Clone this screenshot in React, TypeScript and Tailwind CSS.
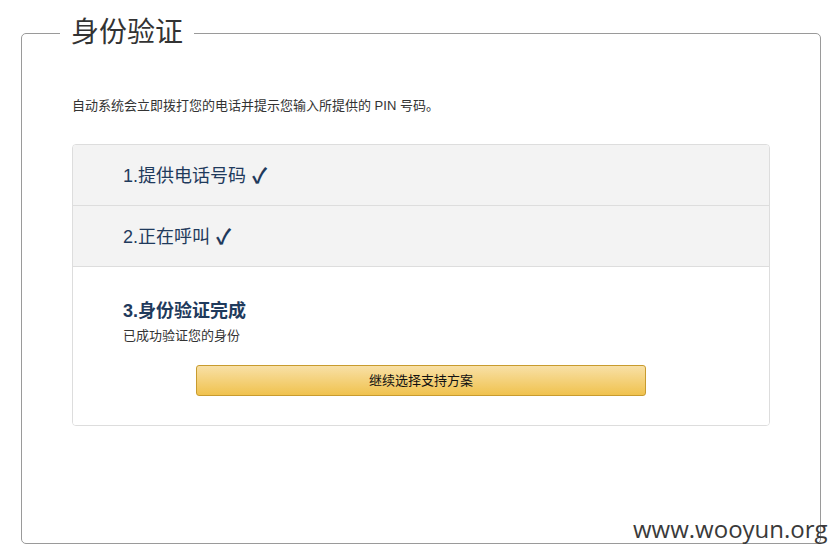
const FONT = "font-['Liberation_Sans','Noto_Sans_CJK_SC',sans-serif]";

function DoneRow({ label }: { label: string }) {
  return (
    <div className="flex h-[61px] items-center border-b border-[#dddddd] bg-[#f3f3f3] pl-[50px] text-[18px] text-[#1f3a5c]">
      <span className="pt-[2px]">{label}</span>
      <span className="ml-[6px] pt-[2px] text-[21px] font-bold">✓</span>
    </div>
  );
}

export default function App() {
  return (
    <div className={`relative h-[560px] w-[839px] bg-white ${FONT}`}>
      <fieldset className="absolute left-[21px] top-[18px] h-[526px] w-[800px] rounded-[5px] border border-[#9a9a9a] px-[50px]">
        <legend className="ml-[-12px] px-[11px] text-[28px] leading-[30px] text-[#333333]">
          身份验证
        </legend>
        <p className="mt-[50px] text-[13px] leading-[16px] text-[#333333]">
          自动系统会立即拨打您的电话并提示您输入所提供的 PIN 号码。
        </p>
        <div className="mt-[30px] overflow-hidden rounded-[4px] border border-[#dddddd]">
          <DoneRow label="1.提供电话号码" />
          <DoneRow label="2.正在呼叫" />
          <div className="h-[158px] bg-white pl-[50px] pt-[32px]">
            <div className="text-[18px] font-bold leading-[24px] text-[#1f3a5c]">3.身份验证完成</div>
            <div className="mt-[5px] text-[13px] leading-[16px] text-[#333333]">已成功验证您的身份</div>
            <div className="ml-[73px] mt-[21px] flex h-[31px] w-[450px] items-center justify-center rounded-[3px] border border-[#c89b2e] bg-[linear-gradient(to_bottom,#f8e0a6,#f0c24e)] text-[13px] text-[#111111]">
              继续选择支持方案
            </div>
          </div>
        </div>
      </fieldset>
      <div className="absolute left-[633px] top-[513px] font-['Open_Sans',sans-serif] text-[24px] leading-[32px] text-[#3a3a3a]">
        www.wooyun.org
      </div>
    </div>
  );
}
